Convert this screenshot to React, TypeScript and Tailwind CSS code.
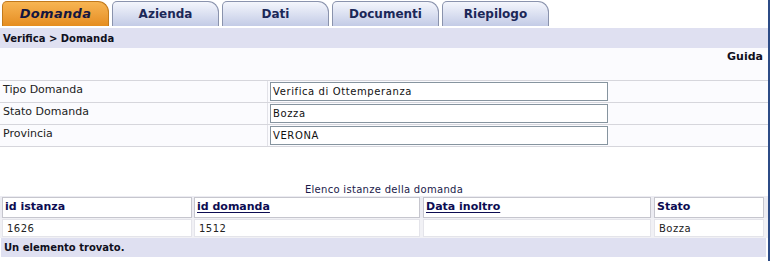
const TABS = ["Domanda", "Azienda", "Dati", "Documenti", "Riepilogo"];

const FIELDS = [
  { label: "Tipo Domanda", value: "Verifica di Ottemperanza" },
  { label: "Stato Domanda", value: "Bozza" },
  { label: "Provincia", value: "VERONA" },
];

const COLUMNS = [
  { label: "id istanza", link: false, width: "w-[190px]", gap: "ml-[2px]", value: "1626" },
  { label: "id domanda", link: true, width: "w-[226px]", gap: "ml-[2px]", value: "1512" },
  { label: "Data inoltro", link: true, width: "w-[228px]", gap: "ml-[3px]", value: "" },
  { label: "Stato", link: false, width: "w-[110px]", gap: "ml-[3px]", value: "Bozza" },
];

function Tab({ label, active }: { label: string; active: boolean }) {
  return (
    <div
      className={
        active
          ? "flex h-[25px] w-[107px] items-center justify-center rounded-tl-[5px] rounded-tr-[11px] border border-b-0 border-[#c27a1c] bg-gradient-to-b from-[#f7b552] to-[#e58d1f] text-[13px] font-bold italic tracking-[0.3px] text-[#141640]"
          : "flex h-[25px] w-[107px] items-center justify-center rounded-tl-[5px] rounded-tr-[11px] border border-b-0 border-[#8a93ad] bg-gradient-to-b from-[#f4f6fc] to-[#c3cbe6] text-[12px] font-bold text-[#1c2858]"
      }
    >
      {label}
    </div>
  );
}

export default function App() {
  return (
    <div className="flex h-[261px] w-[770px] overflow-hidden bg-white font-['DejaVu_Sans',Verdana,sans-serif] text-[#1a1a1a]">
      <div className="flex w-[768px] flex-col">
        <div className="flex h-[26px] items-end gap-[3px] pl-[2px]">
          {TABS.map((t, i) => (
            <Tab key={t} label={t} active={i === 0} />
          ))}
        </div>

        <div className="mt-[2px] flex h-[20px] items-center bg-[#dfe0f1] pl-[3px] text-[10px] font-bold text-[#101020]">
          Verifica &gt; Domanda
        </div>

        <div className="flex h-[32px] justify-end bg-[#fbfbfe] pr-[5px] pt-[1px] text-[11px] font-bold text-[#101020]">
          Guida
        </div>

        <div className="border-t border-[#d6d6dc] bg-[#fbfbfe]">
          {FIELDS.map((f) => (
            <div key={f.label} className="flex h-[22px] border-b border-[#d6d6dc]">
              <div className="w-[268px] border-r border-[#e2e2e8] pl-[3px] pt-[2px] text-[11px] leading-[14px] text-[#222]">
                {f.label}
              </div>
              <div className="pl-[2px] pt-[1px]">
                <div className="flex h-[19px] w-[338px] items-center border border-[#86949f] bg-white pl-[2px] text-[10px] tracking-[0.6px] text-[#111]">
                  {f.value}
                </div>
              </div>
            </div>
          ))}
        </div>

        <div className="h-[36px] bg-white" />

        <div className="h-[13px] text-center text-[10px] leading-[13px] tracking-[0.3px] text-[#1a1a4a]">
          Elenco istanze della domanda
        </div>

        <div className="flex h-[22px] bg-[#ececf2] pt-[1px]">
          {COLUMNS.map((c, i) => (
            <div
              key={c.label}
              className={`${c.width} ${i === 0 ? "ml-[2px]" : c.gap} flex h-[21px] items-center border-[1.5px] border-[#c6c6ce] bg-white pl-[2px] text-[11px] font-bold text-[#0c0c52] ${c.link ? "underline underline-offset-2" : ""}`}
            >
              {c.label}
            </div>
          ))}
        </div>

        <div className="flex h-[20px] bg-[#f1f1f5] pt-[1px]">
          {COLUMNS.map((c, i) => (
            <div
              key={c.label}
              className={`${c.width} ${i === 0 ? "ml-[2px]" : c.gap} flex h-[18px] items-center border border-[#e4e4ea] bg-white pl-[4px] text-[10px] tracking-[0.5px] text-[#222]`}
            >
              {c.value}
            </div>
          ))}
        </div>

        <div className="ml-[1px] flex h-[19px] w-[765px] items-center bg-[#dfe0f1] pl-[3px] text-[10px] font-bold text-[#101020]">
          Un elemento trovato.
        </div>
      </div>
      <div className="w-[2px] bg-[#2c4b86]" />
    </div>
  );
}
